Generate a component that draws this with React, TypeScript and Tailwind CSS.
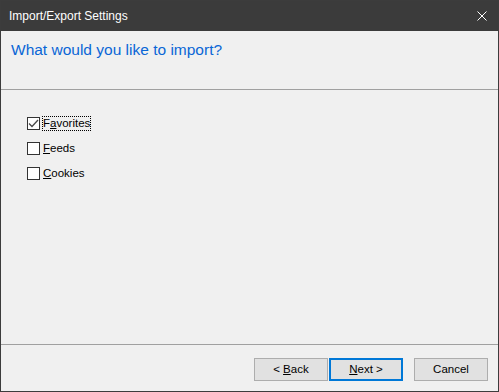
import React, { useState } from 'react';

const font = { fontFamily: '"Liberation Sans", Arial, sans-serif' };

const Checkbox: React.FC<{ checked: boolean; focused?: boolean; onToggle: () => void; children: React.ReactNode }> = ({ checked, focused, onToggle, children }) => (
  <label className="flex items-center h-[15px] cursor-default select-none" onClick={onToggle}>
    <span className="w-[13px] h-[13px] border border-[#333333] bg-white flex items-center justify-center ml-[26px]">
      {checked && (
        <svg width="11" height="11" viewBox="0 0 11 11">
          <path d="M1 5.5 L4 8.5 L10 2" fill="none" stroke="#4a4a4a" strokeWidth="1.3" />
        </svg>
      )}
    </span>
    <span
      className={`ml-[2px] leading-[13px] text-[11.5px] text-black border border-dotted ${focused ? 'border-black' : 'border-transparent'}`}
    >
      {children}
    </span>
  </label>
);

const Button: React.FC<{ primary?: boolean; children: React.ReactNode }> = ({ primary, children }) => (
  <button
    className={`w-[74px] h-[23px] bg-[#e1e1e1] text-[11.5px] text-black flex items-center justify-center ${
      primary ? 'border-2 border-[#0078d7]' : 'border border-[#adadad]'
    }`}
  >
    {children}
  </button>
);

export default function App() {
  const [items, setItems] = useState({ favorites: true, feeds: false, cookies: false });

  return (
    <div style={font} className="w-[499px] h-[392px] bg-[#f0f0f0] border border-[#3c3c3c] flex flex-col">
      {/* Title bar */}
      <div className="h-[30px] bg-[#3b3b3b] flex items-center justify-between pl-[8px] pr-[11px]">
        <span className="text-white text-[12px]">Import/Export Settings</span>
        <svg width="10" height="10" viewBox="0 0 10 10">
          <path d="M0.5 0.5 L9.5 9.5 M9.5 0.5 L0.5 9.5" stroke="#ffffff" strokeWidth="1" />
        </svg>
      </div>

      {/* Header */}
      <div className="h-[58px] pl-[10px] pt-[7px]">
        <h1 className="text-[15.5px] text-[#0a66d6]">What would you like to import?</h1>
      </div>
      <div className="border-t border-[#a0a0a0]" />

      {/* Options */}
      <div className="flex-1 pt-[26px] flex flex-col gap-[10px]">
        <Checkbox checked={items.favorites} focused onToggle={() => setItems({ ...items, favorites: !items.favorites })}>
          F<u>a</u>vorites
        </Checkbox>
        <Checkbox checked={items.feeds} onToggle={() => setItems({ ...items, feeds: !items.feeds })}>
          <u>F</u>eeds
        </Checkbox>
        <Checkbox checked={items.cookies} onToggle={() => setItems({ ...items, cookies: !items.cookies })}>
          <u>C</u>ookies
        </Checkbox>
      </div>

      {/* Footer */}
      <div className="border-t border-[#a0a0a0]" />
      <div className="h-[46px] flex justify-end pt-[13px] pr-[10px]">
        <div className="flex gap-[1px]">
          <Button>&lt; <u className="ml-[3px]">B</u>ack</Button>
          <Button primary><u>N</u>ext &gt;</Button>
        </div>
        <div className="ml-[11px]">
          <Button>Cancel</Button>
        </div>
      </div>
    </div>
  );
}
